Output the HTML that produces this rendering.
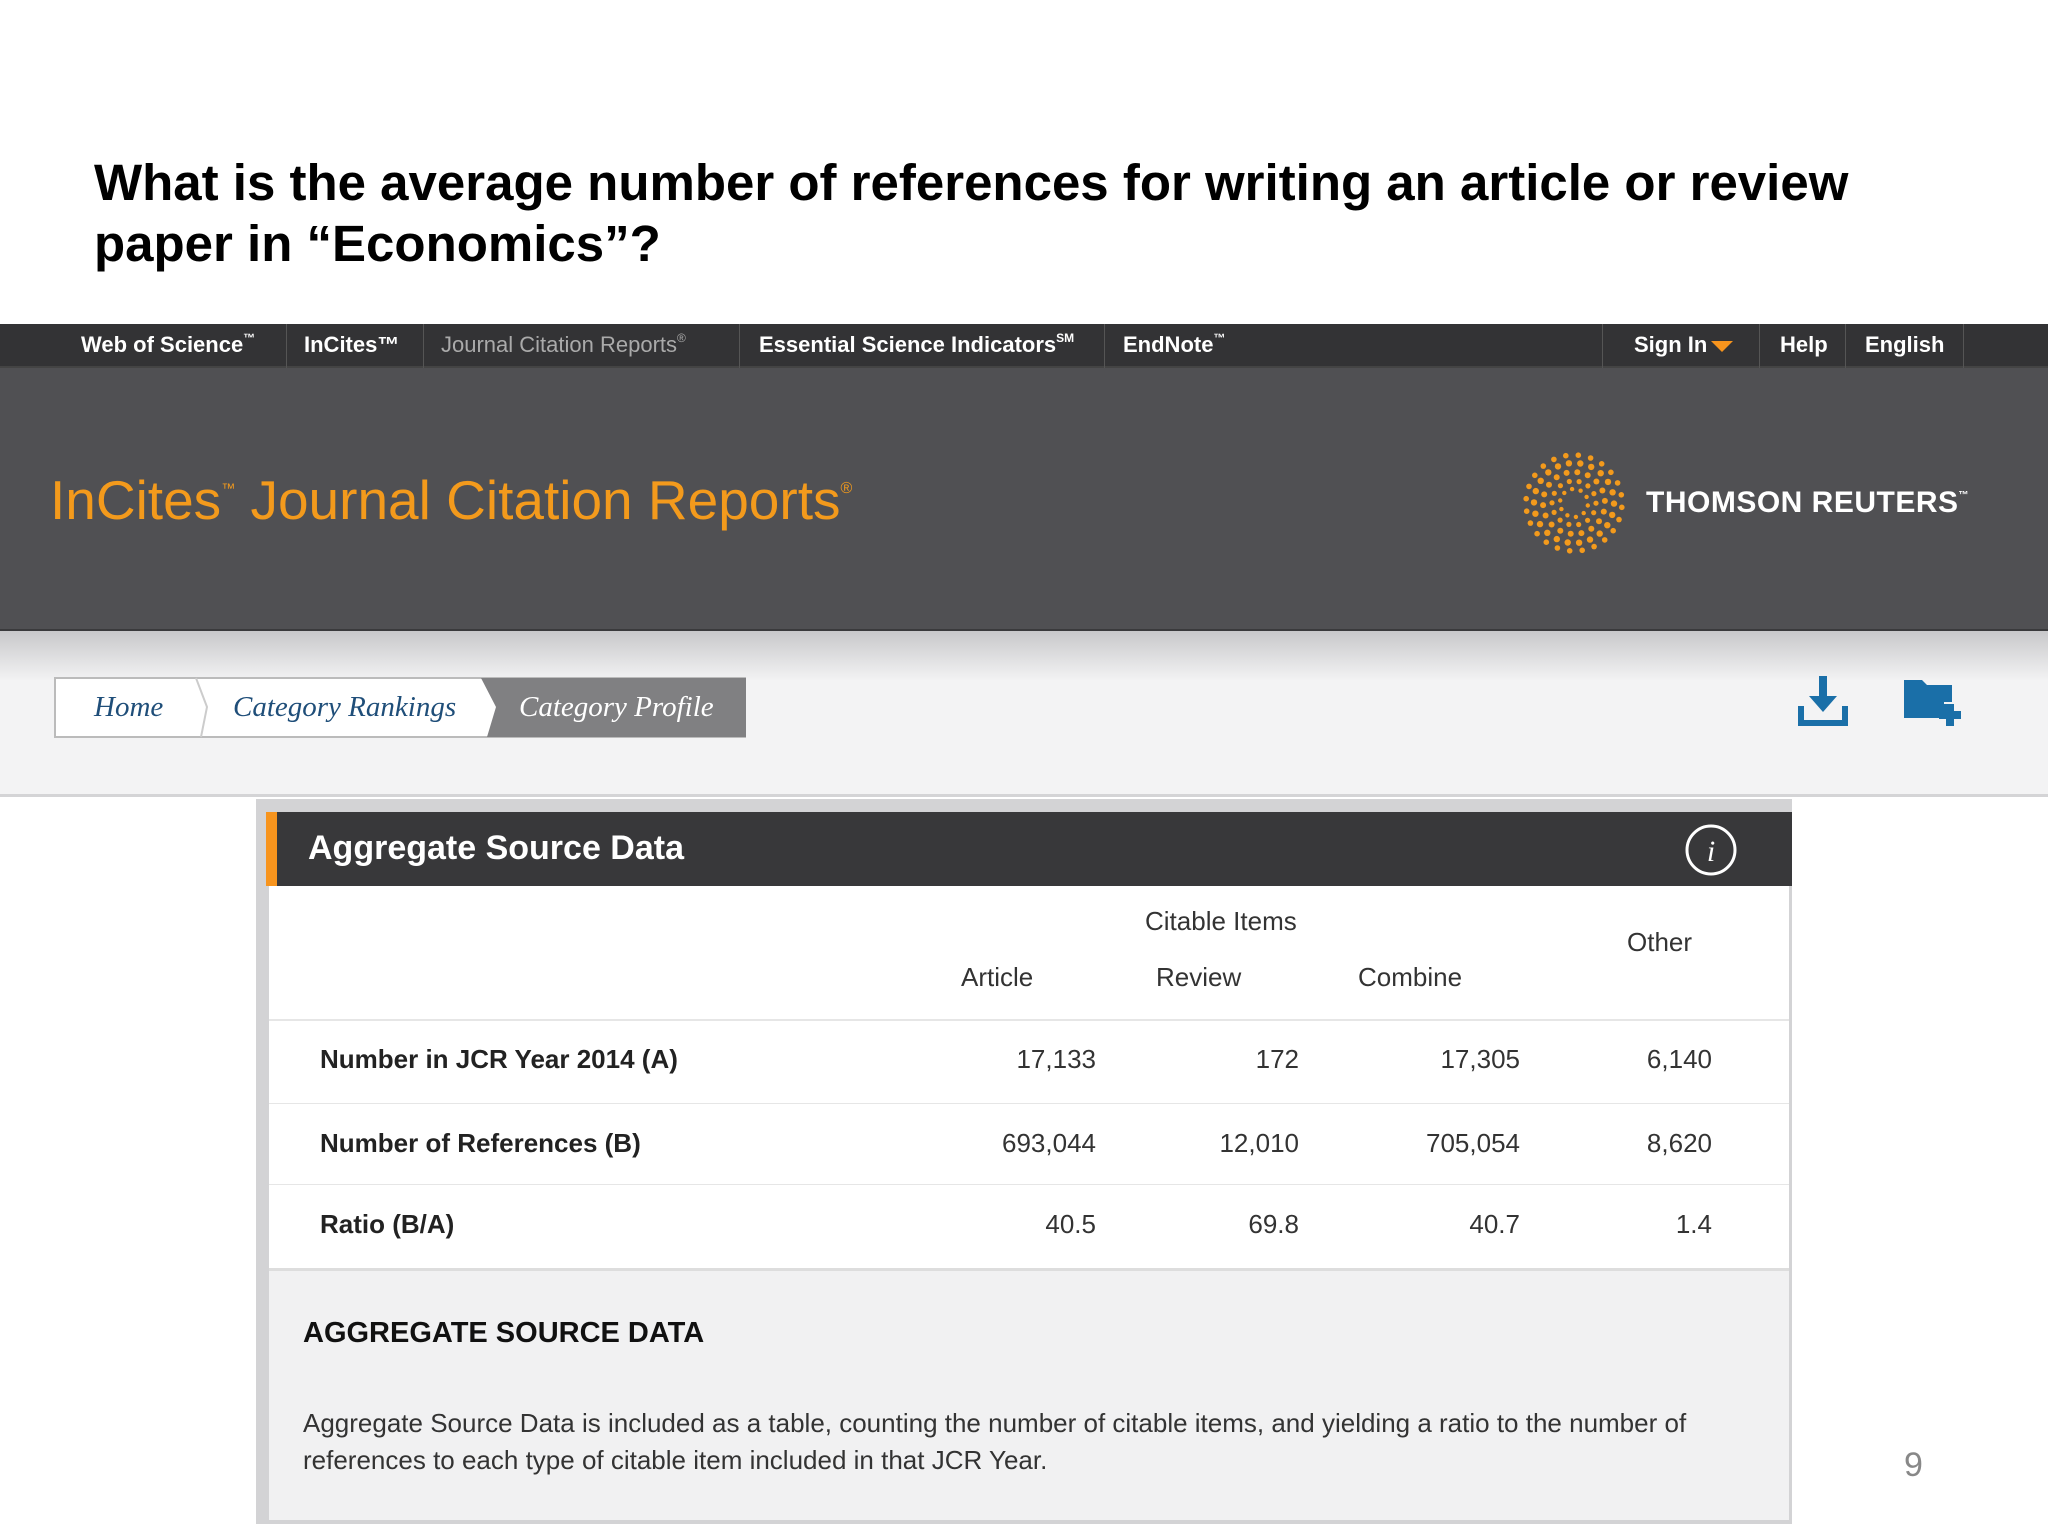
<!DOCTYPE html>
<html><head><meta charset="utf-8"><style>
*{margin:0;padding:0;box-sizing:border-box}
body{width:2048px;height:1536px;background:#fff;position:relative;overflow:hidden;font-family:"Liberation Sans",Arial,sans-serif}
.a{position:absolute;white-space:nowrap}
sup{line-height:0;vertical-align:baseline;position:relative}
.q{left:94px;font-size:51px;font-weight:bold;color:#000;line-height:62px}
#nav{left:0;top:324px;width:2048px;height:44px;background:#333335;border-bottom:2px solid #444}
.n{top:0;height:44px;line-height:42px;font-size:22px;font-weight:bold;color:#fff}
.n sup{font-size:12px;top:-10px}
.sep{top:0;width:1px;height:44px;background:#555}
#hdr{left:0;top:368px;width:2048px;height:263px;background:#505053;border-bottom:2px solid #3a3a3c}
#lt{left:0;top:631px;width:2048px;height:166px;background:linear-gradient(#c8c8ca,#f3f3f4 50px,#f3f3f4);border-bottom:3px solid #d4d4d6}
.bc{font-family:"Liberation Serif",serif;font-style:italic;font-size:29px;color:#1f4e79;top:677px;line-height:61px}
#panel{left:256px;top:799px;width:1536px;height:725px;background:#d3d3d5}
.r{font-size:26px;color:#333;line-height:30px}
.lb{left:320px;font-weight:bold;color:#222}
.num{text-align:right;width:200px}
.hl{left:269px;width:1520px;height:2px;background:#e6e6e6}
</style></head><body>
<div class="a q" style="top:152px">What is the average number of references for writing an article or review</div>
<div class="a q" style="top:213px">paper in “Economics”?</div>

<div id="nav" class="a">
<div class="a n" style="left:81px">Web of Science<sup>™</sup></div>
<div class="a sep" style="left:286px"></div>
<div class="a n" style="left:304px">InCites™</div>
<div class="a sep" style="left:423px"></div>
<div class="a n" style="left:441px;color:#aaa;font-weight:normal">Journal Citation Reports<sup>®</sup></div>
<div class="a sep" style="left:739px"></div>
<div class="a n" style="left:759px">Essential Science Indicators<sup>SM</sup></div>
<div class="a sep" style="left:1104px"></div>
<div class="a n" style="left:1123px">EndNote<sup>™</sup></div>
<div class="a sep" style="left:1602px"></div>
<div class="a n" style="left:1634px">Sign In<span style="display:inline-block;width:0;height:0;border-left:11px solid transparent;border-right:11px solid transparent;border-top:11px solid #f7941d;margin-left:4px;vertical-align:middle"></span></div>
<div class="a sep" style="left:1759px"></div>
<div class="a n" style="left:1780px">Help</div>
<div class="a sep" style="left:1845px"></div>
<div class="a n" style="left:1865px">English</div>
<div class="a sep" style="left:1963px"></div>
</div>

<div id="hdr" class="a">
<div class="a" style="left:50px;top:92px;font-size:55px;color:#f39a1c;line-height:80px">InCites<sup style="font-size:14px;top:-26px">™</sup> Journal Citation Reports<sup style="font-size:16px;top:-26px">®</sup></div>
<svg class="a" style="left:1522px;top:83px" width="104" height="104" viewBox="-52 -52 104 104">
<g id="dots"></g>
</svg>
<div class="a" style="left:1646px;top:118px;font-size:30px;font-weight:bold;color:#fff;letter-spacing:0.5px">THOMSON REUTERS<sup style="font-size:10px;top:-14px">™</sup></div>
</div>

<div id="lt" class="a"></div>
<div class="a" style="left:54px;top:677px;width:692px;height:61px;background:#fff;border:2px solid #bbb"></div>
<svg class="a" style="left:54px;top:677px" width="692" height="61">
<polygon points="427,1 692,1 692,60 433,60 442,30" fill="#808082"/>
<polyline points="142,1 153,30 147,60" fill="none" stroke="#ccc" stroke-width="2"/>
</svg>
<div class="a bc" style="left:94px">Home</div>
<div class="a bc" style="left:233px">Category Rankings</div>
<div class="a bc" style="left:519px;color:#fff">Category Profile</div>
<svg class="a" style="left:1796px;top:676px" width="54" height="52" viewBox="0 0 54 52">
<g fill="#1a6fa8"><rect x="23" y="0" width="8" height="24"/><polygon points="13,20 41,20 27,36"/>
<rect x="2" y="30" width="6" height="20"/><rect x="46" y="30" width="6" height="20"/><rect x="2" y="44" width="50" height="6"/></g></svg>
<svg class="a" style="left:1904px;top:680px" width="62" height="46" viewBox="0 0 62 46">
<g fill="#1a6fa8"><path d="M0 0h18l5 5h25v33H0z"/><rect x="42" y="24" width="8" height="22"/><rect x="35" y="31" width="22" height="8"/></g>
<rect x="40" y="22" width="12" height="2" fill="#f3f3f4"/></svg>

<div id="panel" class="a">
<div class="a" style="left:10px;top:13px;width:1526px;height:74px;background:#38383a"></div>
<div class="a" style="left:10px;top:13px;width:11px;height:74px;background:#f7941d"></div>
<div class="a" style="left:52px;top:30px;font-size:34px;font-weight:bold;color:#fff">Aggregate Source Data</div>
<svg class="a" style="left:1428px;top:24px" width="54" height="54"><circle cx="27" cy="27" r="24" fill="none" stroke="#fff" stroke-width="3"/><text x="27" y="38" font-family="Liberation Serif,serif" font-style="italic" font-size="30" fill="#fff" text-anchor="middle">i</text></svg>
<div class="a" style="left:13px;top:87px;width:1520px;height:383px;background:#fff"></div>
<div class="a" style="left:13px;top:470px;width:1520px;height:251px;background:#f1f1f2"></div>
</div>
<div class="a hl" style="top:1019px"></div>
<div class="a hl" style="top:1103px;height:1px"></div>
<div class="a hl" style="top:1184px;height:1px"></div>
<div class="a hl" style="top:1268px;height:3px;background:#ddd"></div>

<div class="a r" style="left:1145px;top:906px">Citable Items</div>
<div class="a r" style="left:1627px;top:927px">Other</div>
<div class="a r" style="left:961px;top:962px">Article</div>
<div class="a r" style="left:1156px;top:962px">Review</div>
<div class="a r" style="left:1358px;top:962px">Combine</div>

<div class="a r lb" style="top:1044px">Number in JCR Year 2014 (A)</div>
<div class="a r num" style="left:896px;top:1044px">17,133</div>
<div class="a r num" style="left:1099px;top:1044px">172</div>
<div class="a r num" style="left:1320px;top:1044px">17,305</div>
<div class="a r num" style="left:1512px;top:1044px">6,140</div>

<div class="a r lb" style="top:1128px">Number of References (B)</div>
<div class="a r num" style="left:896px;top:1128px">693,044</div>
<div class="a r num" style="left:1099px;top:1128px">12,010</div>
<div class="a r num" style="left:1320px;top:1128px">705,054</div>
<div class="a r num" style="left:1512px;top:1128px">8,620</div>

<div class="a r lb" style="top:1209px">Ratio (B/A)</div>
<div class="a r num" style="left:896px;top:1209px">40.5</div>
<div class="a r num" style="left:1099px;top:1209px">69.8</div>
<div class="a r num" style="left:1320px;top:1209px">40.7</div>
<div class="a r num" style="left:1512px;top:1209px">1.4</div>

<div class="a" style="left:303px;top:1317px;font-size:29px;font-weight:bold;color:#111">AGGREGATE SOURCE DATA</div>
<div class="a" style="left:303px;top:1405px;font-size:26px;color:#333;line-height:37px;white-space:normal;width:1460px">Aggregate Source Data is included as a table, counting the number of citable items, and yielding a ratio to the number of<br>references to each type of citable item included in that JCR Year.</div>

<div class="a" style="left:1904px;top:1446px;font-size:34px;color:#888">9</div>

<script>
var g=document.getElementById('dots'),s='';
var rings=[[14,10,2.2],[22,14,2.6],[31,18,3],[40,22,3.2],[48,24,2.8]];
rings.forEach(function(r){for(var i=0;i<r[1];i++){var a=i/r[1]*Math.PI*2+r[0];s+='<circle cx="'+(r[0]*Math.cos(a)).toFixed(1)+'" cy="'+(r[0]*Math.sin(a)).toFixed(1)+'" r="'+r[2]+'" fill="#f39a1c"/>';}});
g.innerHTML=s;
</script>
</body></html>
